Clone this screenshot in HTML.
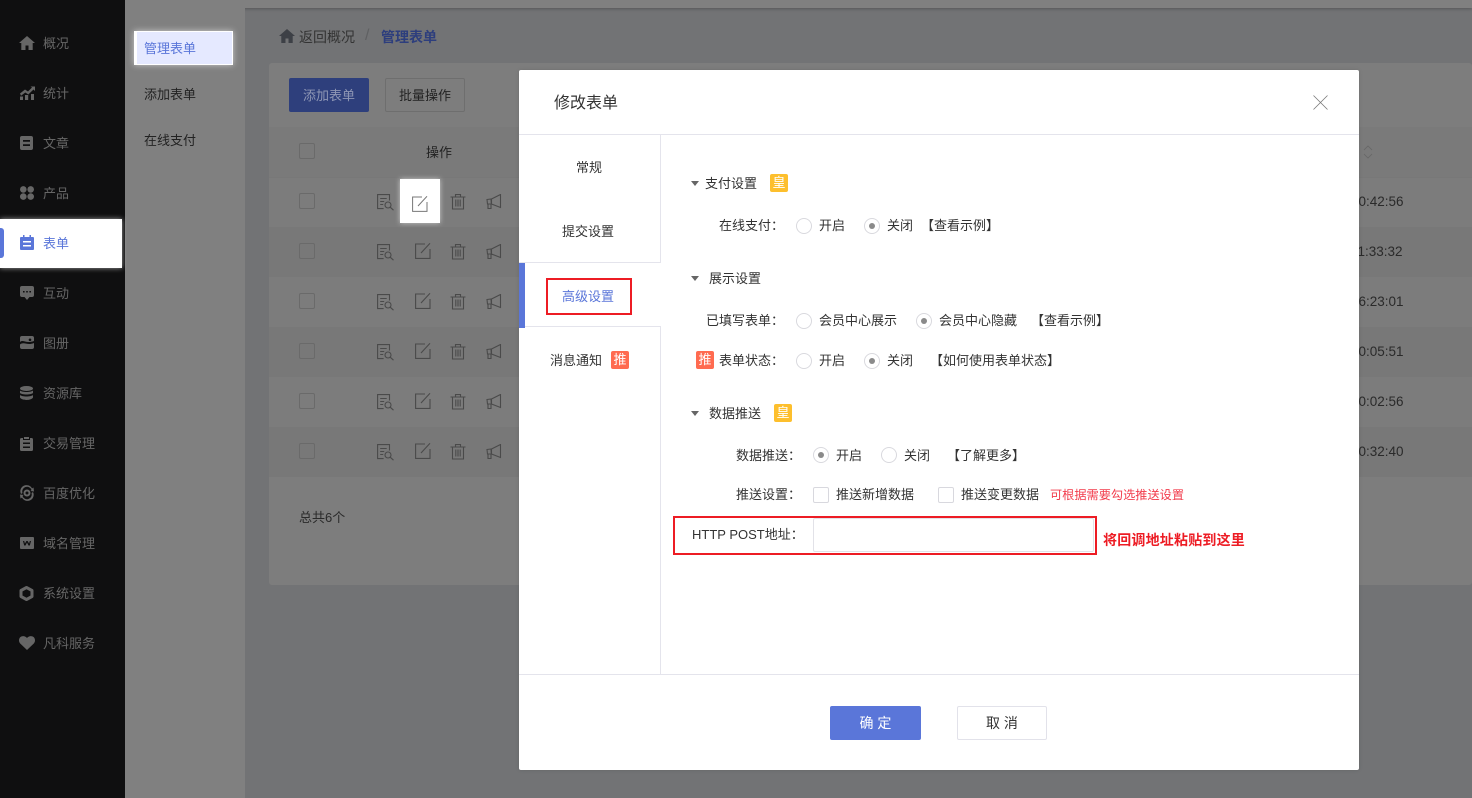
<!DOCTYPE html>
<html lang="zh"><head><meta charset="utf-8"><title>修改表单</title>
<style>
*{box-sizing:border-box}
html,body{margin:0;padding:0;width:1472px;height:798px;overflow:hidden;background:#727375}
body{position:relative;font:13px/20px "Liberation Sans","Noto Sans CJK SC",sans-serif;color:#333}
.a{position:absolute}
.t{position:absolute;white-space:nowrap;line-height:20px}
.nav{color:#666;font-size:13px}
.ic{position:absolute;fill:#666}
.ck{position:absolute;width:16px;height:16px;border:1px solid #6a6a6a;border-radius:2px}
.ln{position:absolute;fill:none;stroke:#4a4a4a;stroke-width:1.1}
.r{position:absolute;width:16px;height:16px;border:1px solid #d9d9de;border-radius:50%;background:#fff}
.r.on:after{content:"";position:absolute;left:4px;top:4px;width:6px;height:6px;border-radius:50%;background:#8a8a8a}
.c{position:absolute;width:16px;height:16px;border:1px solid #d8d8de;border-radius:2px;background:#fff}
.tag{position:absolute;width:18px;height:18px;border-radius:2px;color:#fff;font-size:13px;line-height:18px;text-align:center}
.y{background:#fdbf2d}.o{background:#ff6b50}
.ar{position:absolute;width:0;height:0;border-left:4px solid transparent;border-right:4px solid transparent;border-top:5px solid #666}
</style></head><body>
<svg width="0" height="0" style="position:absolute"><defs>
<symbol id="doc" viewBox="0 0 18 18"><path d="M12.500 6.500V.6H.6v14h6M3.200 4.500h6.500M3.200 7.500h4M3.200 10.500h3"/><circle cx="11" cy="11" r="3"/><path d="M13.200 13.200l3.300 3"/></symbol>
<symbol id="edit" viewBox="0 0 16 16"><path d="M10 1H.6v14.400H15V6M15 .3L6 10"/></symbol>
<symbol id="del" viewBox="0 0 16 16"><path d="M.5 3h15M5.500 3V.6h5V3M2.500 3v12h11V3M5.800 5.500v7M8 5.500v7M10.200 5.500v7"/></symbol>
<symbol id="horn" viewBox="0 0 16 16"><path d="M14.500.5L5.500 5v5l9 3.500zM1 5.500L5 5l.3 5H1.500zM2 10h3v4.500H2z"/></symbol>
</defs></svg>

<!-- top -->
<div class="a" style="left:125px;top:0;width:1347px;height:8px;background:#808080;box-shadow:0 1px 3px rgba(0,0,0,.25)"></div>
<!-- sidebar -->
<div class="a" style="left:0;top:0;width:125px;height:798px;background:#0f0f10"></div>
<div class="a" style="left:125px;top:8px;width:120px;height:790px;background:#808080"></div>
<div class="a" style="left:125px;top:0;width:120px;height:8px;background:#808080"></div>
<div class="a" style="left:0;top:219px;width:122px;height:49px;background:#fff;box-shadow:0 0 5px rgba(255,255,255,.6)"></div>
<div class="a" style="left:0;top:228px;width:4px;height:30px;background:#5a76d9;border-radius:0 3px 3px 0"></div>

<svg class="ic" style="left:19px;top:36px" width="16" height="14" viewBox="0 0 16 14"><path d="M8 0L0 7h2.300v7h4.200V9.500h3V14h4.200V7H16z"/></svg>
<svg class="ic" style="left:20px;top:86px" width="15" height="14" viewBox="0 0 15 14"><path d="M0 10.500h3V14H0zM5 9h3.200v5H5zM11 8h3v6h-3zM0 7.500l5-4 3 2L12 1.500 10.500.5H15V5l-1.500-1.500-5.200 5-3-2L1 9.800z"/></svg>
<svg class="ic" style="left:20px;top:136px" width="13" height="14" viewBox="0 0 13 14"><path fill-rule="evenodd" d="M2 0h9a2 2 0 012 2v10a2 2 0 01-2 2H2a2 2 0 01-2-2V2a2 2 0 012-2zM3 4v1.800h7V4zM3 8.200V10h7V8.200z"/></svg>
<svg class="ic" style="left:20px;top:186px" width="14" height="14" viewBox="0 0 14 14"><circle cx="3.300" cy="3.400" r="3.300"/><circle cx="10.700" cy="3.400" r="3.300"/><circle cx="3.300" cy="10.600" r="3.300"/><circle cx="10.700" cy="10.600" r="3.300"/></svg>
<svg class="ic" style="left:20px;top:235px;fill:#5a76d9" width="14" height="15" viewBox="0 0 14 15"><path fill-rule="evenodd" d="M1 2h2V0h1.500v2h5V0H11v2h2a1 1 0 011 1v11a1 1 0 01-1 1H1a1 1 0 01-1-1V3a1 1 0 011-1zM3 6v1.500h8V6zM3 10v1.500h8V10z"/></svg>
<svg class="ic" style="left:20px;top:286px" width="14" height="14" viewBox="0 0 14 14"><path fill-rule="evenodd" d="M2 0h10a2 2 0 012 2v7a2 2 0 01-2 2H9.500L7 14l-2.500-3H2a2 2 0 01-2-2V2a2 2 0 012-2zM3 5v1.500h1.600V5zM6.200 5v1.500h1.600V5zM9.400 5v1.500H11V5z"/></svg>
<svg class="ic" style="left:20px;top:336px" width="14" height="13" viewBox="0 0 14 13"><path fill-rule="evenodd" d="M2 0h10a2 2 0 012 2v9a2 2 0 01-2 2H2a2 2 0 01-2-2V2a2 2 0 012-2zM0 6c3-3 6 2 14-1V7C7 10 4 5 0 8.500zM10 2.500a1.300 1.300 0 100 2.600 1.300 1.300 0 000-2.600z"/></svg>
<svg class="ic" style="left:20px;top:386px" width="13" height="14" viewBox="0 0 13 14"><ellipse cx="6.500" cy="2.500" rx="6.500" ry="2.500"/><path d="M0 4.500c2 2 11 2 13 0V7c-2 2-11 2-13 0zM0 9c2 2 11 2 13 0v2.500C11 14.800 2 14.800 0 11.500z"/></svg>
<svg class="ic" style="left:20px;top:436px" width="13" height="15" viewBox="0 0 13 15"><path fill-rule="evenodd" d="M4 1h5v2H4zM1.500 2H3v2h7V2h1.500A1.500 1.500 0 0113 3.500v10a1.500 1.500 0 01-1.500 1.500h-10A1.500 1.500 0 010 13.500v-10A1.500 1.500 0 011.500 2zM3 6.500V8h7V6.500zM3 10.500V12h7v-1.500z"/></svg>
<svg class="ic" style="left:19px;top:485px" width="16" height="16" viewBox="0 0 16 16"><path fill-rule="evenodd" d="M8 4.500a3.500 3.500 0 110 7 3.500 3.500 0 010-7zM8 6.500a1.500 1.500 0 100 3 1.500 1.500 0 000-3z"/><path d="M2 9A6 6 0 0113 3.500l1.500-1 .5 4-3.500-.5 1-1A4.500 4.500 0 003.500 8zM14 7A6 6 0 013 12.500l-1.500 1L1 9.500l3.500.5-1 1a4.500 4.500 0 009-3z"/></svg>
<svg class="ic" style="left:20px;top:537px" width="14" height="12" viewBox="0 0 14 12"><path fill-rule="evenodd" d="M1 0h12a1 1 0 011 1v10a1 1 0 01-1 1H1a1 1 0 01-1-1V1a1 1 0 011-1zM3 4l1.200 4.500h1.300L7 5.500l1.500 3h1.300L11 4H9.800l-.7 2.600L7.600 4H6.400L4.900 6.600 4.200 4z"/></svg>
<svg class="ic" style="left:19px;top:586px" width="15" height="15" viewBox="0 0 15 15"><path d="M7.500 1.500L13 4.500v6l-5.500 3-5.500-3v-6z" fill="none" stroke="#666" stroke-width="3" stroke-linejoin="round"/><path d="M7.500 4l3 1.700v3.600l-3 1.700-3-1.700V5.700z" fill="none" stroke="#666" stroke-width="0"/></svg>
<svg class="ic" style="left:19px;top:636px" width="16" height="14" viewBox="0 0 16 14"><path d="M8 14L1.200 7.500C-.4 5.800-.4 3 1.200 1.300 3-.4 6-.4 8 2c2-2.400 5-2.400 6.800-.7 1.600 1.700 1.600 4.500 0 6.200z"/></svg>

<span class="t nav" style="left:43px;top:34px">概况</span>
<span class="t nav" style="left:43px;top:84px">统计</span>
<span class="t nav" style="left:43px;top:134px">文章</span>
<span class="t nav" style="left:43px;top:184px">产品</span>
<span class="t nav" style="left:43px;top:234px;color:#5a76d9">表单</span>
<span class="t nav" style="left:43px;top:284px">互动</span>
<span class="t nav" style="left:43px;top:334px">图册</span>
<span class="t nav" style="left:43px;top:384px">资源库</span>
<span class="t nav" style="left:43px;top:434px">交易管理</span>
<span class="t nav" style="left:43px;top:484px">百度优化</span>
<span class="t nav" style="left:43px;top:534px">域名管理</span>
<span class="t nav" style="left:43px;top:584px">系统设置</span>
<span class="t nav" style="left:43px;top:634px">凡科服务</span>

<!-- submenu -->
<div class="a" style="left:134px;top:31px;width:99px;height:34px;background:#e5e9ff;border:solid #fff;border-width:1px 1px 1px 3px;box-shadow:0 0 6px rgba(255,255,255,.6)"></div>
<span class="t" style="left:144px;top:39px;color:#5a76d9">管理表单</span>
<span class="t" style="left:144px;top:85px;color:#222">添加表单</span>
<span class="t" style="left:144px;top:131px;color:#222">在线支付</span>

<!-- content -->
<svg class="ic" style="left:279px;top:29px;fill:#3d4046" width="16" height="14" viewBox="0 0 16 14"><path d="M8 0L0 7h2.300v7h4.200V9.500h3V14h4.200V7H16z"/></svg>
<span class="t" style="left:299px;top:27px;color:#333;font-size:14px">返回概况</span>
<span class="t" style="left:365px;top:26px;color:#5f6062;font-size:16px">/</span>
<span class="t" style="left:381px;top:27px;color:#2d3e7d;font-weight:700;font-size:14px">管理表单</span>

<div class="a" style="left:269px;top:63px;width:1203px;height:522px;background:#7d7d7d;border-radius:3px"></div>
<div class="a" style="left:289px;top:78px;width:80px;height:34px;background:#2e3f7c;border-radius:2px;color:#8f97b5;text-align:center;line-height:35px">添加表单</div>
<div class="a" style="left:385px;top:78px;width:80px;height:34px;border:1px solid #6e6e6e;border-radius:2px;color:#222;text-align:center;line-height:33px">批量操作</div>

<div class="a" style="left:269px;top:127px;width:1203px;height:50px;background:#7a7a7a"></div>
<div class="a" style="left:269px;top:177px;width:1203px;height:50px;background:#7c7c7c;border-top:1px solid #787878"></div>
<div class="a" style="left:269px;top:227px;width:1203px;height:50px;background:#787878"></div>
<div class="a" style="left:269px;top:277px;width:1203px;height:50px;background:#7c7c7c"></div>
<div class="a" style="left:269px;top:327px;width:1203px;height:50px;background:#787878"></div>
<div class="a" style="left:269px;top:377px;width:1203px;height:50px;background:#7c7c7c"></div>
<div class="a" style="left:269px;top:427px;width:1203px;height:50px;background:#787878"></div>
<span class="t" style="left:426px;top:143px;color:#222">操作</span>

<div class="ck" style="left:299px;top:143px"></div>
<div class="ck" style="left:299px;top:193px"></div>
<div class="ck" style="left:299px;top:243px"></div>
<div class="ck" style="left:299px;top:293px"></div>
<div class="ck" style="left:299px;top:343px"></div>
<div class="ck" style="left:299px;top:393px"></div>
<div class="ck" style="left:299px;top:443px"></div>

<div class="a" style="left:400px;top:179px;width:40px;height:44px;background:#fff;box-shadow:0 0 5px rgba(255,255,255,.6)"></div>

<svg class="ln" style="left:377px;top:194px" width="18" height="18"><use href="#doc"/></svg>
<svg class="ln" style="left:412px;top:196px;stroke:#777;stroke-width:1" width="16" height="16"><use href="#edit"/></svg>
<svg class="ln" style="left:450px;top:194px" width="16" height="16"><use href="#del"/></svg>
<svg class="ln" style="left:486px;top:194px" width="16" height="16"><use href="#horn"/></svg>

<svg class="ln" style="left:377px;top:244px" width="18" height="18"><use href="#doc"/></svg>
<svg class="ln" style="left:415px;top:243px" width="16" height="16"><use href="#edit"/></svg>
<svg class="ln" style="left:450px;top:244px" width="16" height="16"><use href="#del"/></svg>
<svg class="ln" style="left:486px;top:244px" width="16" height="16"><use href="#horn"/></svg>

<svg class="ln" style="left:377px;top:294px" width="18" height="18"><use href="#doc"/></svg>
<svg class="ln" style="left:415px;top:293px" width="16" height="16"><use href="#edit"/></svg>
<svg class="ln" style="left:450px;top:294px" width="16" height="16"><use href="#del"/></svg>
<svg class="ln" style="left:486px;top:294px" width="16" height="16"><use href="#horn"/></svg>

<svg class="ln" style="left:377px;top:344px" width="18" height="18"><use href="#doc"/></svg>
<svg class="ln" style="left:415px;top:343px" width="16" height="16"><use href="#edit"/></svg>
<svg class="ln" style="left:450px;top:344px" width="16" height="16"><use href="#del"/></svg>
<svg class="ln" style="left:486px;top:344px" width="16" height="16"><use href="#horn"/></svg>

<svg class="ln" style="left:377px;top:394px" width="18" height="18"><use href="#doc"/></svg>
<svg class="ln" style="left:415px;top:393px" width="16" height="16"><use href="#edit"/></svg>
<svg class="ln" style="left:450px;top:394px" width="16" height="16"><use href="#del"/></svg>
<svg class="ln" style="left:486px;top:394px" width="16" height="16"><use href="#horn"/></svg>

<svg class="ln" style="left:377px;top:444px" width="18" height="18"><use href="#doc"/></svg>
<svg class="ln" style="left:415px;top:443px" width="16" height="16"><use href="#edit"/></svg>
<svg class="ln" style="left:450px;top:444px" width="16" height="16"><use href="#del"/></svg>
<svg class="ln" style="left:486px;top:444px" width="16" height="16"><use href="#horn"/></svg>

<span class="t" style="left:299px;top:508px;color:#2a2a2a">总共6个</span>

<svg class="a" style="left:1363px;top:145px" width="10" height="14" fill="none" stroke="#666" stroke-width=".8"><path d="M1 5l4-4 4 4M1 9l4 4 4-4"/></svg>
<span class="t" style="left:1351px;top:192px;color:#2a2a2a;font-size:13.500px">10:42:56</span>
<span class="t" style="left:1351px;top:242px;color:#2a2a2a;font-size:13.500px">11:33:32</span>
<span class="t" style="left:1351px;top:292px;color:#2a2a2a;font-size:13.500px">16:23:01</span>
<span class="t" style="left:1351px;top:342px;color:#2a2a2a;font-size:13.500px">10:05:51</span>
<span class="t" style="left:1351px;top:392px;color:#2a2a2a;font-size:13.500px">10:02:56</span>
<span class="t" style="left:1351px;top:442px;color:#2a2a2a;font-size:13.500px">10:32:40</span>

<!-- modal -->
<div class="a" style="left:519px;top:70px;width:840px;height:700px;background:#fff;border-radius:2px;box-shadow:0 0 4px rgba(0,0,0,.12)"></div>
<span class="t" style="left:554px;top:94px;font-size:16px;color:#333">修改表单</span>
<svg class="a" style="left:1313px;top:95px" width="15" height="15" fill="none" stroke="#777" stroke-width=".8"><path d="M.5.500l14 14M14.500.500l-14 14"/></svg>
<div class="a" style="left:519px;top:134px;width:840px;height:1px;background:#e4e4ec"></div>
<div class="a" style="left:519px;top:674px;width:840px;height:1px;background:#e4e4ec"></div>
<div class="a" style="left:660px;top:135px;width:1px;height:128px;background:#e4e4ec"></div>
<div class="a" style="left:660px;top:326px;width:1px;height:348px;background:#e4e4ec"></div>
<div class="a" style="left:519px;top:262px;width:142px;height:1px;background:#e4e4ec"></div>
<div class="a" style="left:519px;top:326px;width:142px;height:1px;background:#e4e4ec"></div>
<div class="a" style="left:519px;top:263px;width:6px;height:65px;background:#5a76d9"></div>
<span class="t" style="left:576px;top:158px">常规</span>
<span class="t" style="left:562px;top:222px">提交设置</span>
<span class="t" style="left:562px;top:287px;color:#5a76d9">高级设置</span>
<div class="a" style="left:546px;top:278px;width:86px;height:37px;border:2px solid #ed1c24"></div>
<span class="t" style="left:550px;top:351px">消息通知</span>
<div class="tag o" style="left:611px;top:351px">推</div>

<div class="ar" style="left:691px;top:181px"></div>
<span class="t" style="left:705px;top:174px">支付设置</span>
<div class="tag y" style="left:770px;top:174px">皇</div>
<span class="t" style="left:719px;top:216px">在线支付：</span>
<div class="r" style="left:796px;top:218px"></div><span class="t" style="left:819px;top:216px">开启</span>
<div class="r on" style="left:864px;top:218px"></div><span class="t" style="left:887px;top:216px">关闭</span>
<span class="t" style="left:921px;top:216px">【查看示例】</span>

<div class="ar" style="left:691px;top:276px"></div>
<span class="t" style="left:709px;top:269px">展示设置</span>
<span class="t" style="left:706px;top:311px">已填写表单：</span>
<div class="r" style="left:796px;top:313px"></div><span class="t" style="left:819px;top:311px">会员中心展示</span>
<div class="r on" style="left:916px;top:313px"></div><span class="t" style="left:939px;top:311px">会员中心隐藏</span>
<span class="t" style="left:1031px;top:311px">【查看示例】</span>
<div class="tag o" style="left:696px;top:351px">推</div>
<span class="t" style="left:719px;top:351px">表单状态：</span>
<div class="r" style="left:796px;top:353px"></div><span class="t" style="left:819px;top:351px">开启</span>
<div class="r on" style="left:864px;top:353px"></div><span class="t" style="left:887px;top:351px">关闭</span>
<span class="t" style="left:930px;top:351px">【如何使用表单状态】</span>

<div class="ar" style="left:691px;top:411px"></div>
<span class="t" style="left:709px;top:404px">数据推送</span>
<div class="tag y" style="left:774px;top:404px">皇</div>
<span class="t" style="left:736px;top:446px">数据推送：</span>
<div class="r on" style="left:813px;top:447px"></div><span class="t" style="left:836px;top:446px">开启</span>
<div class="r" style="left:881px;top:447px"></div><span class="t" style="left:904px;top:446px">关闭</span>
<span class="t" style="left:947px;top:446px">【了解更多】</span>
<span class="t" style="left:736px;top:485px">推送设置：</span>
<div class="c" style="left:813px;top:487px"></div><span class="t" style="left:836px;top:485px">推送新增数据</span>
<div class="c" style="left:938px;top:487px"></div><span class="t" style="left:961px;top:485px">推送变更数据</span>
<span class="t" style="left:1050px;top:485px;font-size:12.200px;color:#f23b4b">可根据需要勾选推送设置</span>
<span class="t" style="left:692px;top:525px">HTTP POST地址：</span>
<div class="a" style="left:813px;top:518px;width:281px;height:34px;border:1px solid #e2e2e8;border-radius:2px;background:#fff"></div>
<div class="a" style="left:673px;top:516px;width:424px;height:39px;border:2px solid #ed1c24"></div>
<span class="t" style="left:1103px;top:530px;font-size:14px;font-weight:700;color:#ed1c24;letter-spacing:.2px">将回调地址粘贴到这里</span>

<div class="a" style="left:830px;top:706px;width:91px;height:34px;background:#5a76d9;border-radius:2px;color:#fff;text-align:center;line-height:34px;font-size:14px">确 定</div>
<div class="a" style="left:957px;top:706px;width:90px;height:34px;border:1px solid #e2e2ea;border-radius:2px;background:#fff;color:#333;text-align:center;line-height:32px;font-size:14px">取 消</div>
</body></html>
